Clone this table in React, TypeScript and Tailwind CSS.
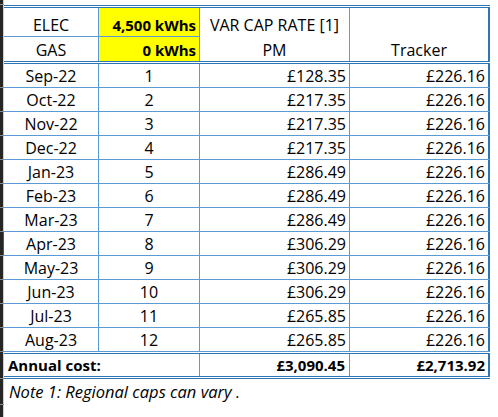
import React from "react";

const rows = [
  ["Sep-22", "1", "£128.35"],
  ["Oct-22", "2", "£217.35"],
  ["Nov-22", "3", "£217.35"],
  ["Dec-22", "4", "£217.35"],
  ["Jan-23", "5", "£286.49"],
  ["Feb-23", "6", "£286.49"],
  ["Mar-23", "7", "£286.49"],
  ["Apr-23", "8", "£306.29"],
  ["May-23", "9", "£306.29"],
  ["Jun-23", "10", "£306.29"],
  ["Jul-23", "11", "£265.85"],
  ["Aug-23", "12", "£265.85"],
];

// excel row header strip on the left
function Strip({ tick, green }: { tick?: boolean; green?: boolean }) {
  return (
    <div className={`flex shrink-0 h-full ${tick ? "border-b border-[#8a8a8a]" : ""}`}>
      <div className="w-[3px] h-full bg-[#262626]" />
      <div className={`w-px h-full ${green ? "bg-[#217346]" : "bg-[#cfcfcf]"}`} />
    </div>
  );
}

function DoubleLine() {
  return (
    <div className="flex h-[3px]">
      <Strip />
      <div className="w-[486px] border-y border-[#2e75b6]" />
    </div>
  );
}

export default function App() {
  return (
    <div className="h-[417px] w-[498px] flex flex-col bg-white text-black text-[16px] leading-[20px] font-['Open_Sans',sans-serif]">
      {/* top gap */}
      <div className="flex h-[5px]">
        <Strip tick />
      </div>
      <DoubleLine />

      {/* header */}
      <div className="flex h-[53px]">
        <Strip />
        <div className="flex">
          <div className="w-[95px] flex flex-col border-r border-[#5b9bd5]">
            <div className="h-[29px] flex items-end justify-center pb-px border-b border-[#5b9bd5]">ELEC</div>
            <div className="h-[24px] flex items-end justify-center pb-px">GAS</div>
          </div>
          <div className="w-[101px] flex flex-col bg-[#ffff00] border-r border-[#5b9bd5] font-bold text-[15px]">
            <div className="h-[29px] flex items-end justify-end pr-[3px] pb-px border-b border-[#5b9bd5]">4,500 kWhs</div>
            <div className="h-[24px] flex items-end justify-end pr-[3px] pb-px">0 kWhs</div>
          </div>
          <div className="w-[150px] flex flex-col border-r border-[#5b9bd5]">
            <div className="h-[29px] flex items-end justify-center pb-[2px]">VAR CAP RATE [1]</div>
            <div className="h-[24px] flex items-end justify-center pb-px">PM</div>
          </div>
          <div className="w-[140px] flex flex-col border-r-2 border-[#2e75b6]">
            <div className="h-[29px]" />
            <div className="h-[24px] flex items-end justify-center pb-px">Tracker</div>
          </div>
        </div>
      </div>
      <DoubleLine />

      {/* monthly rows */}
      {rows.map(([month, n, pm], i) => (
        <div key={month} className="flex h-[24px]">
          <Strip tick green={i === 7} />
          <div className="flex border-b border-[#5b9bd5]">
            <div className="w-[95px] flex items-center justify-center border-r border-[#5b9bd5]">{month}</div>
            <div className="w-[101px] flex items-center justify-center border-r border-[#5b9bd5]">{n}</div>
            <div className="w-[150px] flex items-center justify-end pr-[3px] border-r border-[#5b9bd5]">{pm}</div>
            <div className="w-[140px] flex items-center justify-end pr-[3px] border-r-2 border-[#2e75b6]">£226.16</div>
          </div>
        </div>
      ))}
      <div className="flex h-[2px]">
        <Strip />
        <div className="w-[486px] border-b border-[#2e75b6]" />
      </div>

      {/* totals */}
      <div className="flex h-[23px] font-bold text-[15px]">
        <Strip />
        <div className="flex border-b border-[#2e75b6]">
          <div className="w-[196px] flex items-center pl-[4px] border-r border-[#5b9bd5]">Annual cost:</div>
          <div className="w-[150px] flex items-center justify-end pr-[4px] border-r border-[#5b9bd5]">£3,090.45</div>
          <div className="w-[140px] flex items-center justify-end pr-[3px] border-r-2 border-[#2e75b6]">£2,713.92</div>
        </div>
      </div>
      <div className="flex h-[2px]">
        <Strip tick />
        <div className="w-[486px] border-b border-[#2e75b6]" />
      </div>

      {/* note */}
      <div className="flex h-[26px]">
        <Strip tick />
        <div className="flex items-center pl-[5px] italic text-[16.5px]">Note 1: Regional caps can vary .</div>
      </div>
      <div className="flex flex-1">
        <Strip />
      </div>
    </div>
  );
}
